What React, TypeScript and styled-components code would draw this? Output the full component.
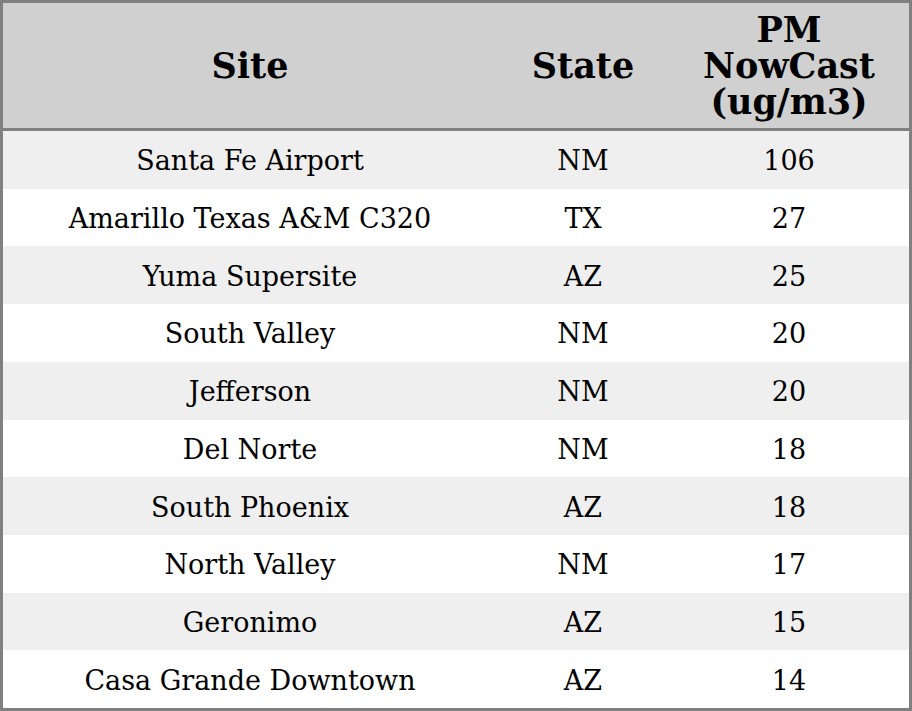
import styled, { createGlobalStyle } from "styled-components";

const rows = [
  { site: "Santa Fe Airport", state: "NM", pm: 106 },
  { site: "Amarillo Texas A&M C320", state: "TX", pm: 27 },
  { site: "Yuma Supersite", state: "AZ", pm: 25 },
  { site: "South Valley", state: "NM", pm: 20 },
  { site: "Jefferson", state: "NM", pm: 20 },
  { site: "Del Norte", state: "NM", pm: 18 },
  { site: "South Phoenix", state: "AZ", pm: 18 },
  { site: "North Valley", state: "NM", pm: 17 },
  { site: "Geronimo", state: "AZ", pm: 15 },
  { site: "Casa Grande Downtown", state: "AZ", pm: 14 },
];

const GlobalStyle = createGlobalStyle`
  html, body {
    margin: 0;
    padding: 0;
    background: #ffffff;
  }
  body {
    font-family: "DejaVu Serif", "Liberation Serif", serif;
  }
`;

const App = () => {
  return (
      <>
        <GlobalStyle/>
        <Table>
          <HeaderRow>
            <HeadCell>Site</HeadCell>
            <HeadCell>State</HeadCell>
            <HeadCell>PM<br/>NowCast<br/>(ug/m3)</HeadCell>
          </HeaderRow>
          <Body>
            {rows.map((row, index) => (
                <Row key={index} $striped={index % 2 === 0}>
                  <Cell>{row.site}</Cell>
                  <Cell>{row.state}</Cell>
                  <Cell>{row.pm}</Cell>
                </Row>
            ))}
          </Body>
        </Table>
      </>
  );
};

const Table = styled.div`
  box-sizing: border-box;
  width: 912px;
  height: 711px;
  border: 3px solid #808080;
  display: flex;
  flex-direction: column;
  color: #000000;
`;

const columns = `494px 172px 1fr`;

const HeaderRow = styled.div`
  display: grid;
  grid-template-columns: ${columns};
  height: 125px;
  background: #d0d0d0;
  border-bottom: 3px solid #808080;
`;

const HeadCell = styled.div`
  display: flex;
  align-items: center;
  justify-content: center;
  text-align: center;
  font-size: 35px;
  font-weight: bold;
  line-height: 36px;
`;

const Body = styled.div`
  flex: 1;
  display: flex;
  flex-direction: column;
`;

const Row = styled.div<{ $striped: boolean }>`
  flex: 1;
  display: grid;
  grid-template-columns: ${columns};
  background: ${({$striped}) => ($striped ? "#efefef" : "#ffffff")};
`;

const Cell = styled.div`
  display: flex;
  align-items: center;
  justify-content: center;
  padding-top: 2px;
  font-size: 27px;
`;

export default App;
